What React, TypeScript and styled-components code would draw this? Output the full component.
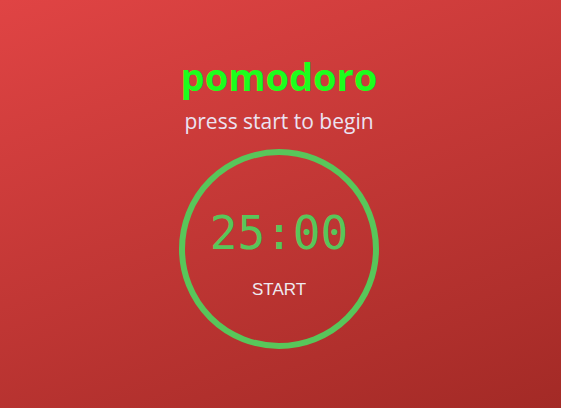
import React from "react";
import styled, { createGlobalStyle } from "styled-components";

const Global = createGlobalStyle`
  html, body { margin: 0; padding: 0; height: 100%; }
  body { background: #a82b27; }
  #root { height: 100%; }
`;

const Page = styled.main`
  width: 561px;
  height: 408px;
  box-sizing: border-box;
  background: linear-gradient(160deg, #e04444 0%, #a32a26 100%);
  display: flex;
  flex-direction: column;
  align-items: center;
  padding: 52px 3px 0 0;
`;

const Title = styled.h1`
  margin: 0;
  font-family: "Open Sans", sans-serif;
  font-weight: 700;
  font-size: 38px;
  line-height: 48px;
  color: #1cff1c;
`;

const Subtitle = styled.p`
  margin: 7px 0 0;
  font-family: "Open Sans", sans-serif;
  font-size: 21px;
  line-height: 28px;
  color: #ebe3f2;
`;

const Dial = styled.div`
  margin-top: 14px;
  width: 200px;
  height: 200px;
  box-sizing: border-box;
  border: 6px solid #58c65a;
  border-radius: 50%;
  display: flex;
  flex-direction: column;
  align-items: center;
  padding-top: 51px;
`;

const Time = styled.div`
  font-family: "DejaVu Sans Mono", monospace;
  font-size: 46px;
  line-height: 54px;
  color: #58c65a;
`;

const StartButton = styled.button`
  margin-top: 20px;
  background: none;
  border: none;
  padding: 0;
  cursor: pointer;
  font-family: "Liberation Sans", Arial, sans-serif;
  font-size: 17px;
  line-height: 20px;
  color: #eeeaf0;
`;

export default function App() {
  return (
    <>
      <Global />
      <Page>
        <Title>pomodoro</Title>
        <Subtitle>press start to begin</Subtitle>
        <Dial>
          <Time>25:00</Time>
          <StartButton>START</StartButton>
        </Dial>
      </Page>
    </>
  );
}
